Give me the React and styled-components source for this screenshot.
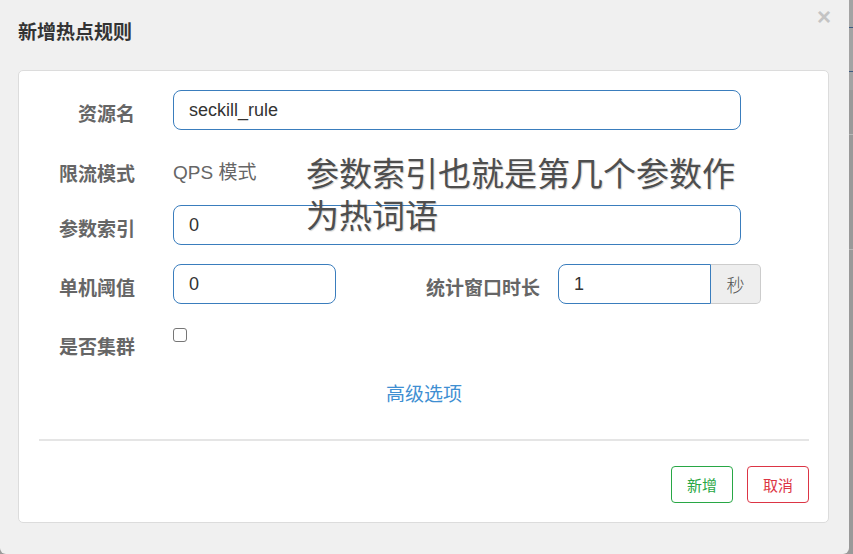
import React from "react";
import styled, { createGlobalStyle } from "styled-components";

const Global = createGlobalStyle`
  html, body { margin: 0; padding: 0; }
  body {
    background: #9a9a9a;
    font-family: "Liberation Sans", "Noto Sans CJK SC", sans-serif;
    overflow: hidden;
  }
`;

const Page = styled.div`
  display: flex;
  width: 853px;
  height: 554px;
`;

const Dialog = styled.div`
  position: relative;
  width: 849px;
  height: 554px;
  background: #f0f0f0;
  border-radius: 0 0 6px 6px;
  display: flex;
  flex-direction: column;
`;

const Strip = styled.div`
  flex: 1;
  background:
    linear-gradient(#3d5a80, #3d5a80) 0 27px / 100% 1px no-repeat,
    linear-gradient(#3d5a80, #3d5a80) 0 71px / 100% 1px no-repeat,
    linear-gradient(#b8b8b8, #b8b8b8) 0 134px / 100% 1px no-repeat,
    linear-gradient(#b8b8b8, #b8b8b8) 0 249px / 100% 1px no-repeat,
    linear-gradient(#a3a3a3, #a3a3a3) 0 0 / 100% 90px no-repeat,
    #999;
`;

const Header = styled.div`
  height: 70px;
  display: flex;
  justify-content: space-between;
  align-items: flex-start;
  padding: 0 18px 0 18px;
  box-sizing: border-box;
`;

const Title = styled.h4`
  margin: 19px 0 0;
  font-family: "Noto Sans CJK SC", sans-serif;
  font-size: 19px;
  line-height: 24px;
  font-weight: 700;
  color: #333;
`;

const Close = styled.button`
  margin-top: 5px;
  padding: 0;
  border: none;
  background: none;
  font-family: "Liberation Sans", sans-serif;
  font-size: 24px;
  line-height: 24px;
  font-weight: 700;
  color: #c4c4c4;
  cursor: pointer;
`;

const Card = styled.div`
  margin: 0 20px 0 18px;
  background: #fff;
  border: 1px solid #dcdcdc;
  border-radius: 5px;
  padding: 19px 19px 19px 20px;
  display: flex;
  flex-direction: column;
`;

const Row = styled.div`
  display: flex;
  align-items: flex-start;
  height: ${(p) => p.$h || 40}px;
  margin-bottom: ${(p) => (p.$last ? 0 : 19)}px;
`;

const Label = styled.label`
  flex: none;
  width: ${(p) => p.$w || 96}px;
  padding-top: ${(p) => p.$pt || 10}px;
  margin-right: ${(p) => p.$mr || 38}px;
  text-align: right;
  font-family: "Noto Sans CJK SC", sans-serif;
  font-size: 19px;
  line-height: 26px;
  font-weight: 700;
  color: #666;
`;

const Static = styled.span`
  padding-top: 11px;
  font-family: "Liberation Sans", "Noto Sans CJK SC", sans-serif;
  font-size: 19px;
  line-height: 26px;
  color: #666;
`;

const Input = styled.input`
  box-sizing: border-box;
  width: ${(p) => p.$w}px;
  height: 40px;
  padding: 0 15px;
  border: 1px solid #3a7dbd;
  border-radius: ${(p) => (p.$grouped ? "8px 0 0 8px" : "8px")};
  font-family: "Liberation Sans", sans-serif;
  font-size: 18px;
  color: #333;
  background: #fff;
  outline: none;
`;

const Group = styled.div`
  display: flex;
`;

const Addon = styled.span`
  box-sizing: border-box;
  width: 50px;
  height: 40px;
  display: flex;
  align-items: center;
  justify-content: center;
  background: #eee;
  border: 1px solid #ccc;
  border-left: none;
  border-radius: 0 5px 5px 0;
  font-family: "Noto Sans CJK SC", sans-serif;
  font-size: 18px;
  font-weight: 300;
  color: #555;
`;

const Check = styled.input`
  appearance: none;
  margin: 5px 0 0;
  width: 14px;
  height: 14px;
  border: 1px solid #767676;
  border-radius: 3px;
  background: #fff;
  box-sizing: border-box;
`;

const Advanced = styled.a`
  margin-top: 17px;
  align-self: center;
  font-family: "Noto Sans CJK SC", sans-serif;
  font-size: 19px;
  line-height: 26px;
  color: #3f8fd2;
  cursor: pointer;
`;

const Divider = styled.hr`
  margin: 33px 0 0;
  height: 2px;
  border: none;
  background: #e5e5e5;
`;

const Footer = styled.div`
  margin-top: 25px;
  display: flex;
  justify-content: flex-end;
  gap: 14px;
`;

const Button = styled.button`
  width: 62px;
  height: 37px;
  padding: 0;
  background: #fff;
  border: 1px solid ${(p) => p.$c};
  color: ${(p) => p.$c};
  border-radius: 4px;
  font-family: "Noto Sans CJK SC", sans-serif;
  font-size: 15px;
  cursor: pointer;
`;

const Note = styled.div`
  position: absolute;
  left: 306px;
  top: 151px;
  font-family: "Noto Sans CJK SC", sans-serif;
  font-size: 33px;
  line-height: 42px;
  color: #4e4e4e;
  text-shadow: 1px 1px 1px rgba(0, 0, 0, 0.18);
  white-space: nowrap;
  pointer-events: none;
`;

export default function App() {
  return (
    <Page>
      <Global />
      <Dialog>
        <Header>
          <Title>新增热点规则</Title>
          <Close>×</Close>
        </Header>
        <Card>
          <Row>
            <Label>资源名</Label>
            <Input $w={568} defaultValue="seckill_rule" />
          </Row>
          <Row $h={37}>
            <Label $pt={11}>限流模式</Label>
            <Static>QPS 模式</Static>
          </Row>
          <Row>
            <Label>参数索引</Label>
            <Input $w={568} defaultValue="0" />
          </Row>
          <Row>
            <Label>单机阈值</Label>
            <Input $w={163} defaultValue="0" />
            <Label $w={204} $mr={18}>统计窗口时长</Label>
            <Group>
              <Input $w={153} $grouped defaultValue="1" />
              <Addon>秒</Addon>
            </Group>
          </Row>
          <Row $last>
            <Label>是否集群</Label>
            <Check type="checkbox" />
          </Row>
          <Advanced>高级选项</Advanced>
          <Divider />
          <Footer>
            <Button $c="#28a745">新增</Button>
            <Button $c="#dc3545">取消</Button>
          </Footer>
        </Card>
        <Note>
          参数索引也就是第几个参数作
          <br />
          为热词语
        </Note>
      </Dialog>
      <Strip />
    </Page>
  );
}
